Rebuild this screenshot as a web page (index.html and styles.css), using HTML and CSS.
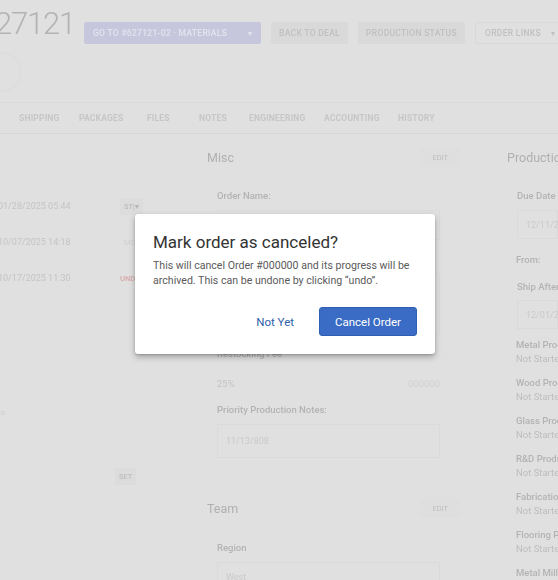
FILE: index.html
```html
<!DOCTYPE html>
<html>
<head>
<meta charset="utf-8">
<link rel="stylesheet" href="styles.css">
</head>
<body>
<div class="page">
  <header class="header">
    <div class="order-no">627121</div>
    <div class="actions">
      <span class="btn btn-primary">Go to #627121-02 · Materials <span class="caret">▾</span></span>
      <span class="btn btn-flat back">Back to deal</span>
      <span class="btn btn-flat status-btn">Production status</span>
      <span class="btn btn-outline">Order links <span class="caret">▾</span></span>
    </div>
  </header>
  <div class="logo-row"><div class="logo"></div></div>
  <nav class="tabs">
    <span>Shipping</span><span>Packages</span><span>Files</span><span>Notes</span><span>Engineering</span><span>Accounting</span><span>History</span>
  </nav>
  <main class="content">
    <section class="col-left">
      <div class="log-row first"><span class="date">01/28/2025 05:44</span><span class="mini-btn">ST|▾</span></div>
      <div class="log-row"><span class="date">10/07/2025 14:18</span><span class="mini-btn ghost">MO</span></div>
      <div class="log-row"><span class="date">10/17/2025 11:30</span><span class="mini-red">UNDO</span></div>
      <div class="log-note">Sa</div>
      <div class="set-row"><span class="mini-btn">SET</span></div>
    </section>
    <section class="col-mid">
      <div class="sec-head"><span class="sec-title">Misc</span><span class="edit">EDIT</span></div>
      <div class="field">
        <div class="label">Order Name:</div>
        <div class="input tall"></div>
      </div>
      <div class="field">
        <div class="label">Customer PO:</div>
        <div class="input area"></div>
      </div>
      <div class="field">
        <div class="label">Restocking Fee</div>
        <div class="split"><span>25%</span><span>000000</span></div>
      </div>
      <div class="field">
        <div class="label">Priority Production Notes:</div>
        <div class="input notes"><span>11/13/808</span></div>
      </div>
      <div class="sec-head team"><span class="sec-title">Team</span><span class="edit">EDIT</span></div>
      <div class="field">
        <div class="label">Region</div>
        <div class="input"><span>West</span></div>
      </div>
    </section>
    <section class="col-right">
      <div class="sec-head"><span class="sec-title">Production</span></div>
      <div class="field">
        <div class="label">Due Date</div>
        <div class="input"><span>12/11/2025</span></div>
      </div>
      <div class="from-row"><span class="label">From:</span><span class="sel"></span></div>
      <div class="field">
        <div class="label">Ship After</div>
        <div class="input ship"><span>12/01/2025</span></div>
      </div>
      <div class="status"><div class="label">Metal Production</div><div class="val">Not Started</div></div>
      <div class="status"><div class="label">Wood Production</div><div class="val">Not Started</div></div>
      <div class="status"><div class="label">Glass Production</div><div class="val">Not Started</div></div>
      <div class="status"><div class="label">R&amp;D Production</div><div class="val">Not Started</div></div>
      <div class="status"><div class="label">Fabrication</div><div class="val">Not Started</div></div>
      <div class="status"><div class="label">Flooring Production</div><div class="val">Not Started</div></div>
      <div class="status"><div class="label">Metal Millwork</div><div class="val">Not Started</div></div>
    </section>
  </main>
</div>

<div class="dialog">
  <h2 class="dialog-title">Mark order as canceled?</h2>
  <p class="dialog-text">This will cancel Order #000000 and its progress will be archived. This can be undone by clicking “undo”.</p>
  <div class="dialog-actions">
    <button class="link-btn">Not Yet</button>
    <button class="main-btn">Cancel Order</button>
  </div>
</div>
</body>
</html>
```

FILE: styles.css
```css
html, body {
  margin: 0;
  padding: 0;
}
body {
  width: 558px;
  height: 580px;
  overflow: hidden;
  background: #e0e0e0;
  font-family: Roboto, "Liberation Sans", sans-serif;
  position: relative;
}
.page {
  filter: blur(0.55px);
  color: #bdbdbd;
  width: 558px;
  height: 580px;
  overflow: hidden;
}

/* header */
.header {
  display: flex;
  align-items: flex-start;
  height: 46px;
}
.order-no {
  flex: 0 0 87px;
  min-width: 0;
  margin-left: -21px;
  margin-top: 5px;
  font-size: 31px;
  font-weight: 300;
  color: #b3b3b3;
  letter-spacing: -1.2px;
  line-height: 38px;
  white-space: nowrap;
}
.actions {
  display: flex;
  gap: 10px;
  margin-left: 18px;
  margin-top: 22px;
  flex-shrink: 0;
}
.btn {
  height: 22px;
  display: inline-flex;
  align-items: center;
  padding: 0 9px;
  font-size: 8.5px;
  font-weight: 500;
  text-transform: uppercase;
  letter-spacing: 0.3px;
  border-radius: 2px;
  white-space: nowrap;
  box-sizing: border-box;
  flex-shrink: 0;
}
.btn-primary {
  background: #c6c7dd;
  color: #e4e4ee;
  width: 177px;
  justify-content: space-between;
}
.btn-flat {
  background: #d9d9d9;
  color: #c0c0c0;
  justify-content: center;
}
.btn-flat.back { width: 77px; }
.btn-flat.status-btn { width: 107px; }
.btn-outline {
  border: 1px solid #d8d8d8;
  color: #c0c0c0;
  width: 90px;
  justify-content: space-between;
}
.caret { font-size: 8px; }

.logo-row {
  height: 50px;
}
.logo {
  width: 36px;
  height: 36px;
  margin-left: -18px;
  margin-top: 6px;
  border-radius: 50%;
  border: 2px solid #dddddd;
}

/* tabs */
.tabs {
  display: flex;
  align-items: center;
  height: 30px;
  border-top: 1px solid #dadada;
  border-bottom: 1px solid #d7d7d7;
  padding-left: 19px;
  font-size: 8.5px;
  font-weight: 700;
  text-transform: uppercase;
  color: #c6c6c6;
  letter-spacing: 0.2px;
}
.tabs span { flex-shrink: 0; }
.tabs span:nth-child(1) { width: 60px; }
.tabs span:nth-child(2) { width: 68px; }
.tabs span:nth-child(3) { width: 52px; }
.tabs span:nth-child(4) { width: 50px; }
.tabs span:nth-child(5) { width: 75px; }
.tabs span:nth-child(6) { width: 74px; }

/* content */
.content {
  display: grid;
  grid-template-columns: 200px 300px 58px;
  padding-top: 13px;
}
.col-left {
  display: flex;
  flex-direction: column;
}
.log-row {
  display: flex;
  align-items: center;
  height: 36px;
}
.log-row.first { margin-top: 41px; }
.date {
  margin-left: -2px;
  width: 122px;
  font-size: 9px;
  color: #c4c4c4;
  white-space: nowrap;
}
.mini-btn {
  font-size: 7.5px;
  color: #b5b5b5;
  padding: 4px 4px;
  background: #dcdcdc;
}
.mini-btn.ghost { background: none; color: #d0d0d0; }
.mini-red {
  font-size: 7.5px;
  color: #d8a8a8;
  font-weight: 500;
}
.log-note {
  margin-top: 112px;
  margin-left: -4px;
  font-size: 8px;
  color: #cfcfcf;
}
.set-row {
  margin-top: 47px;
  padding-left: 115px;
}

.col-mid {
  padding-left: 7px;
  padding-right: 60px;
}
.col-right {
  padding-left: 7px;
  overflow: hidden;
  white-space: nowrap;
}
.sec-head {
  display: flex;
  justify-content: space-between;
  align-items: center;
  height: 20px;
  margin-bottom: 22px;
}
.sec-head.team { margin-top: 40px; margin-bottom: 23px; }
.sec-title {
  font-size: 12.5px;
  color: #b0b0b0;
}
.edit {
  font-size: 7.5px;
  color: #bdbdbd;
  padding: 5px 12px;
  margin-right: -20px;
  background: #dedede;
}
.field {
  padding-left: 10px;
}
.label {
  font-size: 9.5px;
  font-weight: 500;
  color: #b3b3b3;
  line-height: 14px;
}
.input {
  height: 29px;
  margin: 7px 0 12px;
  border: 1px solid #dadada;
  box-sizing: border-box;
  display: flex;
  align-items: center;
  padding-left: 8px;
  font-size: 9px;
  color: #cacaca;
}
.input.tall { height: 30px; }
.input.area { height: 62px; }
.input.notes { height: 34px; margin-bottom: 34px; }
.input.ship { margin-top: 6px; margin-bottom: 9px; }
.split {
  display: flex;
  justify-content: space-between;
  font-size: 9.5px;
  color: #c4c4c4;
  margin: 17px 0 14px;
}
.split span:last-child { color: #d2d2d2; }
.from-row {
  display: flex;
  align-items: center;
  gap: 20px;
  padding-left: 9px;
  height: 22px;
  margin: -2px 0 9px;
}
.sel {
  width: 30px;
  height: 22px;
  border: 1px solid #d8d8d8;
}
.status {
  padding-left: 9px;
  height: 38px;
}
.status .val {
  font-size: 9.5px;
  color: #bdbdbd;
  line-height: 14px;
}

/* dialog */
.dialog {
  position: absolute;
  left: 135px;
  top: 214px;
  width: 300px;
  height: 140px;
  box-sizing: border-box;
  background: #ffffff;
  border-radius: 3px;
  box-shadow: 0 3px 6px rgba(0,0,0,0.28), 0 1px 2px rgba(0,0,0,0.15);
  padding: 18px;
  display: flex;
  flex-direction: column;
}
.dialog-title {
  margin: 0;
  font-size: 17px;
  font-weight: 400;
  color: #333333;
  line-height: 20px;
}
.dialog-text {
  margin: 6px 0 0;
  font-size: 10.6px;
  line-height: 15px;
  color: #5a5a5a;
}
.dialog-actions {
  margin-top: auto;
  display: flex;
  justify-content: flex-end;
  align-items: center;
  gap: 13px;
}
.link-btn {
  border: none;
  background: none;
  font-family: inherit;
  font-size: 11.5px;
  color: #2e5ea8;
  padding: 0 12px;
  height: 29px;
}
.main-btn {
  border: 1px solid #2f5fb3;
  background: #3b6cc5;
  color: #ffffff;
  font-family: inherit;
  font-size: 11.5px;
  width: 98px;
  height: 29px;
  border-radius: 3px;
}
```
